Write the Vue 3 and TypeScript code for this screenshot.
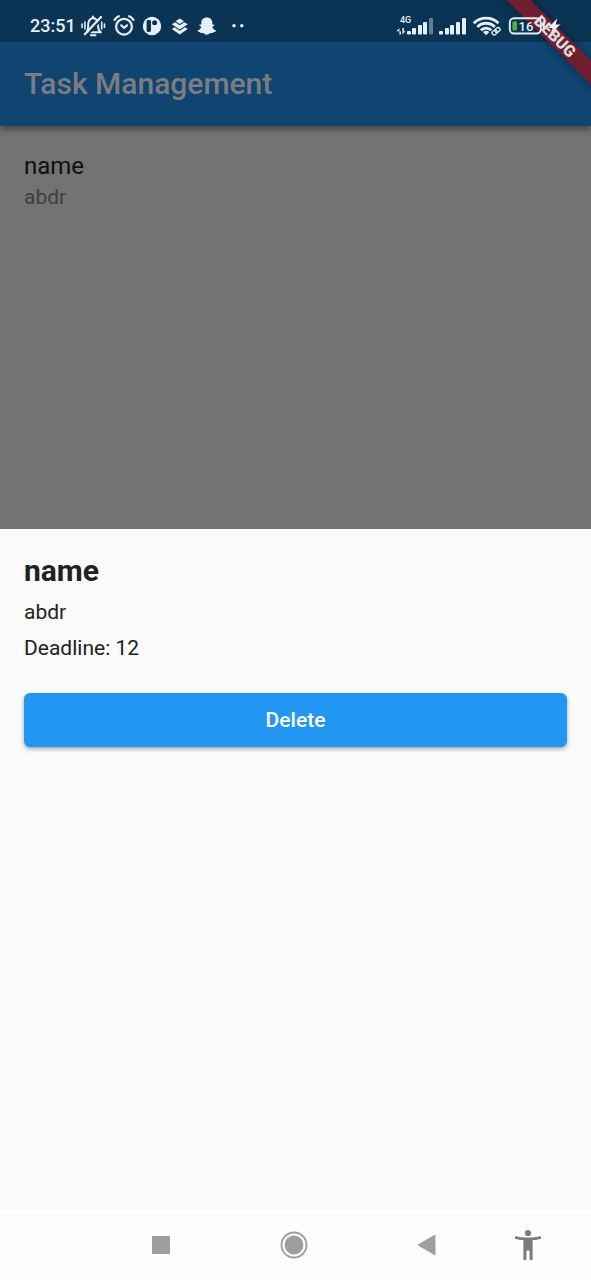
<script setup lang="ts">
import { ref } from 'vue'

interface Task {
  name: string
  description: string
  deadline: string
}

const tasks = ref<Task[]>([{ name: 'name', description: 'abdr', deadline: '12' }])
const selected = ref<Task | null>(tasks.value[0])

const simOneBars = [
  { x: 407, y: 31, off: false },
  { x: 412, y: 28, off: false },
  { x: 418, y: 25, off: false },
  { x: 423, y: 22, off: false },
  { x: 429, y: 18, off: true },
]
const simTwoBars = [
  { x: 439, y: 31 },
  { x: 445, y: 28 },
  { x: 450, y: 25 },
  { x: 456, y: 22 },
  { x: 462, y: 18 },
]

function removeTask(): void {
  tasks.value = tasks.value.filter((t) => t !== selected.value)
  selected.value = null
}
</script>

<template>
  <div class="screen">
    <div class="app">
      <div class="banner"><span class="banner-text">DEBUG</span></div>

      <div class="status">
        <div class="status-left">
          <span class="clock">23:51</span>
          <svg class="bell" width="26" height="24" viewBox="80 14 26 24" fill="none" stroke="#e4eff8" stroke-width="2" stroke-linecap="round">
            <path d="M86.8 31.5C88.6 29.5 88 26 88.3 23.5C88.8 19.8 91 18.3 93 18C95.5 18.3 97.3 20.2 97.8 23.5C98.2 26.5 97.8 29.5 99.8 31.5" />
            <path d="M87 32.2H101M93 16.6V18" />
            <path d="M90.8 35.3H95.4" />
            <path d="M87.6 34.6L102.4 18.4" stroke="#0b3354" stroke-width="2" stroke-linecap="butt" />
            <path d="M84.8 34.2L101 17" stroke-width="2.2" />
            <path d="M82 24V27.5M84.9 22V29M101.7 22V29M104.5 24V27.5" stroke-width="1.6" />
          </svg>
          <svg class="alarm" width="24" height="24" viewBox="112 14 24 24" fill="none" stroke="#e4eff8" stroke-width="2.2" stroke-linecap="round">
            <circle cx="124" cy="26.7" r="7.9" />
            <path d="M114.5 19.8C115.6 18.1 117 17 118.8 16.2M133.5 19.8C132.4 18.1 131 17 129.2 16.2" />
            <path d="M121.2 25.3L124 27.8L127 25.3" />
          </svg>
          <svg class="disc" width="20" height="24" viewBox="142 14 20 24">
            <circle cx="152" cy="26" r="9.2" fill="#e4eff8" />
            <rect x="146.6" y="20" width="4.4" height="12" rx="1.4" fill="#0b3354" />
            <circle cx="154.6" cy="22.8" r="2.5" fill="#0b3354" />
          </svg>
          <svg class="stack" width="18" height="24" viewBox="171 14 18 24" fill="#e4eff8">
            <path d="M175.6 21.3L179.7 18.4L184 21.3L179.7 24Z" />
            <path d="M171.8 24.2L175.2 22.2L179.7 25.2L184.2 22.2L187.8 24.2L179.7 29.6Z" />
            <path d="M171.8 29L174.6 27.3L179.7 30.8L185 27.3L187.8 29L179.7 34.4Z" />
          </svg>
          <svg class="ghost" width="20" height="24" viewBox="197 14 20 24">
            <path d="M206.8 17.4C203.4 17.4 201.3 19.6 201.3 22.6V24.5C200.8 24.9 199.4 24.2 199.2 25C199 26 201.2 26.2 201.2 27C200.8 28.8 199.2 30 197.6 30.4C197.2 31.5 199.2 31.8 200 32C200.4 33.5 201 33 202.6 32.9C204.2 33 205 34.7 206.8 34.7C208.6 34.7 209.4 33 211 32.9C212.6 33 213.2 33.5 213.6 32C214.4 31.8 216.4 31.5 216 30.4C214.4 30 212.8 28.8 212.4 27C212.4 26.2 214.6 26 214.4 25C214.2 24.2 212.8 24.9 212.3 24.5V22.6C212.3 19.6 210.2 17.4 206.8 17.4Z" fill="#e4eff8" />
          </svg>
          <svg class="more" width="14" height="24" viewBox="231 14 14 24" fill="#e4eff8">
            <circle cx="234" cy="25.7" r="1.7" />
            <circle cx="241.8" cy="25.7" r="1.7" />
          </svg>
        </div>

        <div class="status-right">
          <svg class="sim" width="38" height="24" viewBox="396 14 38 24" fill="#e4eff8">
            <text x="400" y="23" class="net">4G</text>
            <path d="M396.4 31.2L399.4 28V34.5H400.9V31.2ZM405.4 31.2L402.4 34.5V28H403.9V31.2Z" />
            <rect v-for="b in simOneBars" :key="b.x" :x="b.x" :y="b.y" width="4" :height="34.5 - b.y" rx="1" :opacity="b.off ? 0.4 : 1" />
          </svg>
          <svg class="sim" width="28" height="24" viewBox="439 14 28 24" fill="#e4eff8">
            <rect v-for="b in simTwoBars" :key="b.x" :x="b.x" :y="b.y" width="4" :height="34.5 - b.y" rx="1" />
          </svg>
          <svg class="wifi" width="28" height="24" viewBox="473 14 28 24" fill="none" stroke="#e4eff8" stroke-width="2.8">
            <path d="M473.8 23.2A17.5 17.5 0 0 1 498.4 23.2" />
            <path d="M477.4 26.9A12.2 12.2 0 0 1 494.8 26.9" />
            <path d="M480.9 30.3A7.2 7.2 0 0 1 491.3 30.3" />
            <path d="M483 32A4.4 4.4 0 0 1 489.2 32L486.1 35.2Z" fill="#e4eff8" stroke="none" />
            <g stroke-width="1.3" transform="rotate(-40 496 31.3)">
              <rect x="491.5" y="29.3" width="5.4" height="4" rx="2" fill="#0b3354" />
              <rect x="495.3" y="29.3" width="5.4" height="4" rx="2" />
            </g>
          </svg>
          <svg class="battery" width="54" height="24" viewBox="508 14 54 24">
            <rect x="509.8" y="18.3" width="31" height="15.2" rx="4.2" fill="none" stroke="#e4eff8" stroke-width="1.9" />
            <rect x="512.4" y="21.2" width="4.6" height="9.4" rx="1.6" fill="#4fb52c" />
            <text x="518.5" y="31" class="level">16</text>
            <path d="M542.8 22.5Q544.8 23 544.8 26Q544.8 29 542.8 29.5Z" fill="#e4eff8" />
            <path d="M557.4 18.2L548.3 28H553L550 34.2L560.4 24.6H555.6Z" fill="#f4f8fb" />
          </svg>
        </div>
      </div>

      <header class="bar"><h1 class="title">Task Management</h1></header>

      <main class="list">
        <button v-for="t in tasks" :key="t.name" type="button" class="row" @click="selected = t">
          <span class="row-name">{{ t.name }}</span>
          <span class="row-text">{{ t.description }}</span>
        </button>
      </main>

      <section v-if="selected" class="sheet">
        <h2 class="sheet-name">{{ selected.name }}</h2>
        <p class="sheet-text">{{ selected.description }}</p>
        <p class="sheet-text">Deadline: {{ selected.deadline }}</p>
        <button type="button" class="delete" @click="removeTask">Delete</button>
      </section>
    </div>

    <nav class="nav">
      <button type="button" class="key" aria-label="Recent apps">
        <svg width="32" height="32" viewBox="0 0 32 32"><rect x="7" y="7" width="18" height="18" rx="1" fill="#9e9e9e" /></svg>
      </button>
      <button type="button" class="key" aria-label="Home">
        <svg width="32" height="32" viewBox="0 0 32 32">
          <circle cx="16" cy="16" r="12.5" fill="none" stroke="#9e9e9e" stroke-width="1.9" />
          <circle cx="16" cy="16" r="9.4" fill="#9e9e9e" />
        </svg>
      </button>
      <button type="button" class="key" aria-label="Back">
        <svg width="32" height="32" viewBox="0 0 32 32"><path d="M7 16L24 6.2V25.8Z" fill="#9e9e9e" stroke="#9e9e9e" stroke-width="1" stroke-linejoin="round" /></svg>
      </button>
      <button type="button" class="key" aria-label="Accessibility">
        <svg width="32" height="32" viewBox="0 0 32 32" fill="#7b7b7b">
          <circle cx="16" cy="4" r="3.1" />
          <path d="M3.3 7C11 9 21 9 28.7 7L29.2 9.8C26.4 10.5 23.5 11 20.6 11.3V31H17.6V21.5H14.4V31H11.4V11.3C8.5 11 5.6 10.5 2.8 9.8Z" />
        </svg>
      </button>
    </nav>
  </div>
</template>

<style>
body {
  margin: 0;
  background: #fefefe;
}
</style>

<style scoped>
.screen {
  display: flex;
  flex-direction: column;
  min-height: 100vh;
  font-family: Roboto, "Liberation Sans", sans-serif;
}

.app {
  position: relative;
  flex: 1;
  display: grid;
  grid-template-rows: auto auto 1fr 56.25%;
  overflow: hidden;
  background: #737373;
}

.app::before {
  content: "";
  position: absolute;
  top: 0;
  left: 0;
  right: 0;
  height: 42px;
  z-index: 1;
  background: #0b3354;
}

.status {
  position: relative;
  z-index: 3;
  display: flex;
  justify-content: space-between;
  align-items: center;
  box-sizing: border-box;
  height: 42px;
  padding: 10px 29px 0 30px;
}

.status-left,
.status-right {
  display: flex;
  align-items: center;
}

.status svg {
  display: block;
  flex: none;
}

.clock {
  width: 50px;
  font-size: 18px;
  line-height: 24px;
  font-weight: 500;
  color: #e4eff8;
}

.alarm,
.disc {
  margin-left: 6px;
}

.stack {
  margin-left: 9px;
}

.ghost {
  margin-left: 8px;
}

.more {
  margin-left: 14px;
}

.sim {
  margin-right: 5px;
}

.wifi {
  margin-left: 1px;
  margin-right: 7px;
}

.net {
  font-size: 9px;
  font-weight: 500;
}

.level {
  font-size: 13px;
  font-weight: 500;
  fill: #e4eff8;
}

.banner {
  position: absolute;
  z-index: 2;
  top: 28px;
  right: -44px;
  width: 160px;
  height: 17px;
  display: flex;
  align-items: center;
  justify-content: center;
  transform: rotate(45deg);
  background: #701e2e;
  box-shadow: 0 0 8px rgba(0, 0, 0, 0.4);
}

.banner-text {
  font-size: 16px;
  line-height: 17px;
  font-weight: 900;
  color: #dcdcdc;
}

.bar {
  position: relative;
  display: flex;
  align-items: center;
  height: 84px;
  padding: 0 24px;
  background: #0f4570;
  box-shadow: 0 3px 7px rgba(0, 0, 0, 0.45);
}

.title {
  margin: 0;
  font-size: 30px;
  line-height: 36px;
  font-weight: 500;
  color: #7b7d80;
}

.list {
  padding: 24px 0;
}

.row {
  display: flex;
  flex-direction: column;
  width: 100%;
  padding: 0 24px;
  border: 0;
  background: none;
  font-family: inherit;
  text-align: left;
}

.row-name {
  font-size: 24px;
  line-height: 32px;
  color: #0f0f0f;
}

.row-text {
  font-size: 21px;
  line-height: 30px;
  color: #3f3f3f;
}

.sheet {
  padding: 24px;
  background: #fafafa;
  color: #212121;
}

.sheet-name {
  margin: 0;
  font-size: 30px;
  line-height: 36px;
  font-weight: 700;
}

.sheet-text {
  margin: 0;
  font-size: 21px;
  line-height: 36px;
}

.sheet-name + .sheet-text {
  margin-top: 5px;
}

.delete {
  display: block;
  width: 100%;
  height: 54px;
  margin-top: 27px;
  padding: 0;
  border: 0;
  border-radius: 6px;
  background: #2196f3;
  box-shadow: 0 2px 4px rgba(0, 0, 0, 0.35);
  font-family: inherit;
  font-size: 21px;
  font-weight: 500;
  color: #ffffff;
}

.nav {
  display: grid;
  grid-template-columns: 133fr 133fr 133fr 69fr;
  align-items: center;
  box-sizing: border-box;
  height: 71px;
  padding: 0 28px 0 16%;
  background: #fefefe;
}

.key {
  display: flex;
  justify-content: center;
  padding: 0;
  border: 0;
  background: none;
}
</style>
